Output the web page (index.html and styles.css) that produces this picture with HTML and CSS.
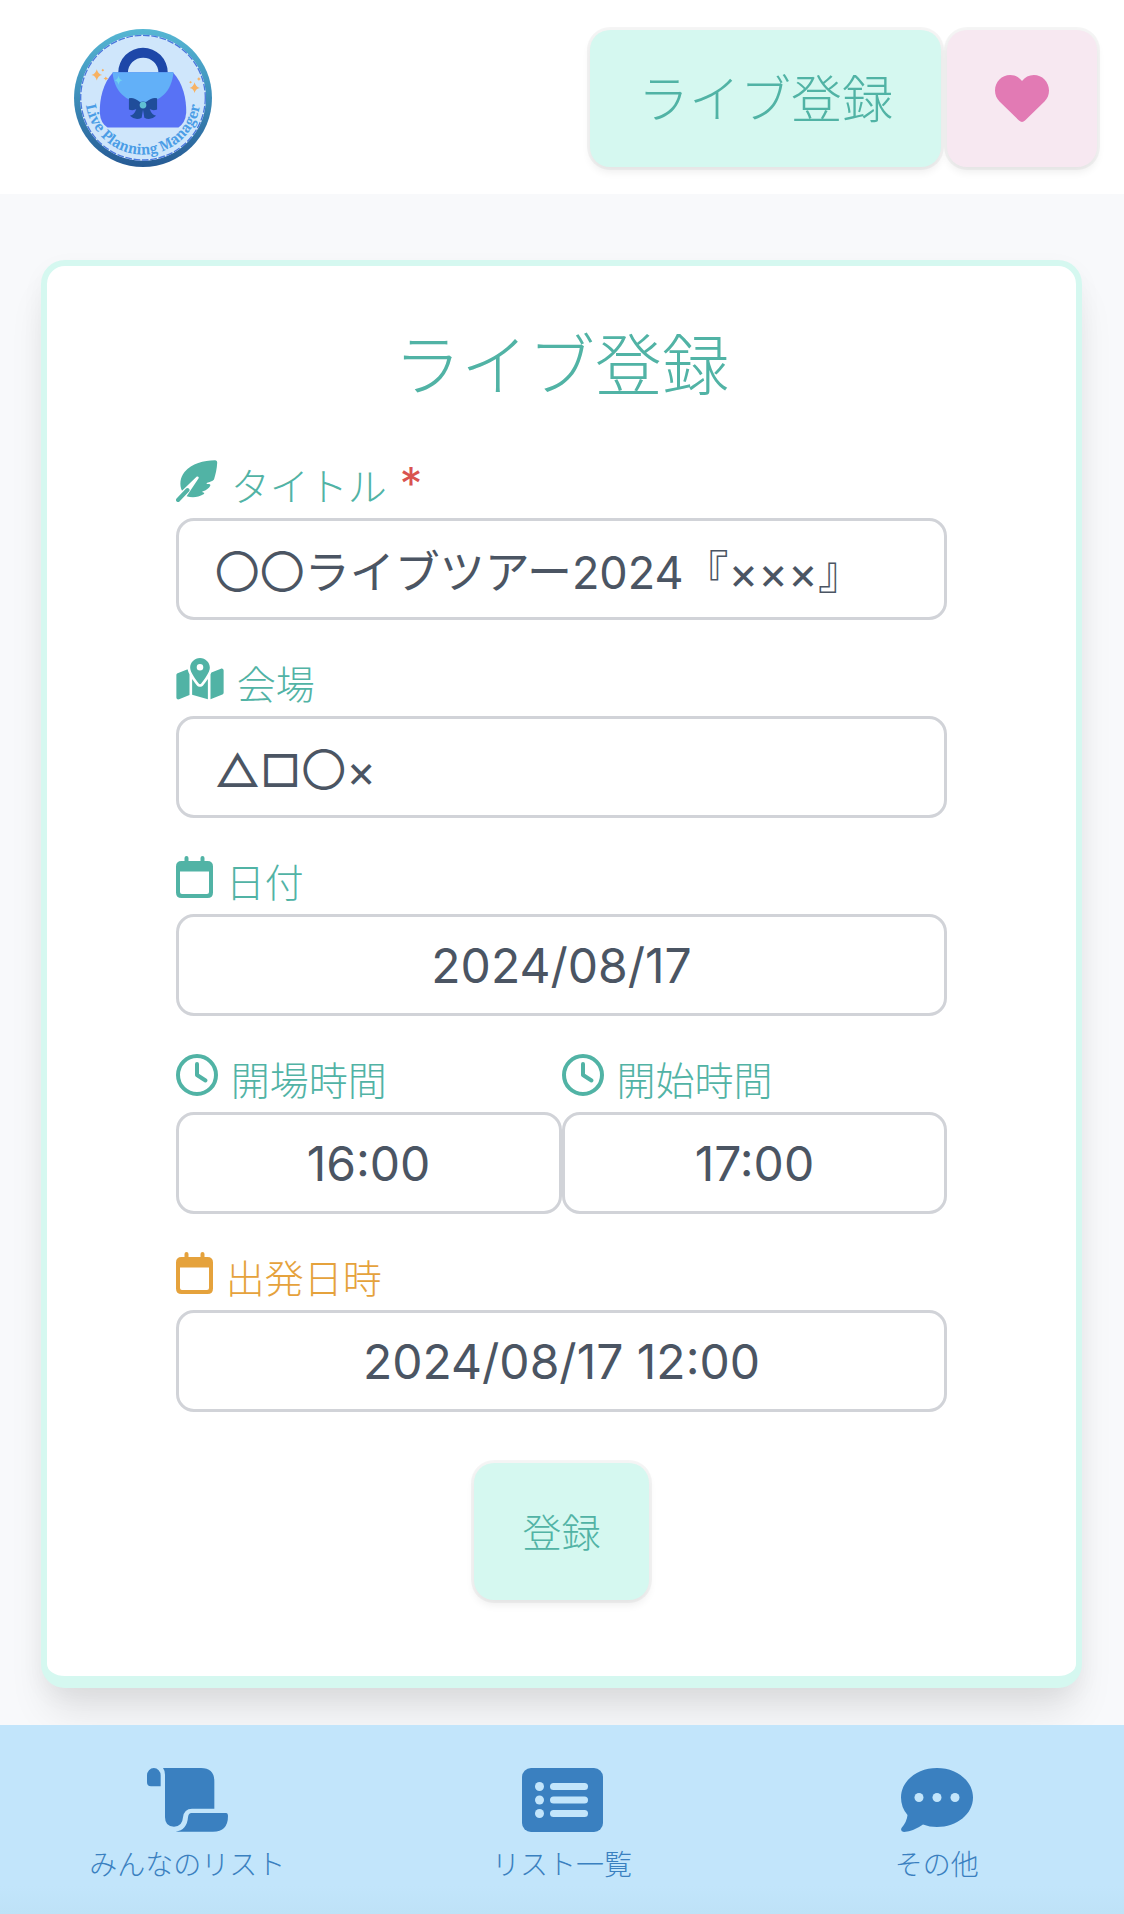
FILE: index.html
```html
<!DOCTYPE html>
<html lang="ja">
<head>
<meta charset="utf-8">
<meta name="viewport" content="width=device-width, initial-scale=1">
<title>ライブ登録</title>
<link rel="stylesheet" href="styles.css">
</head>
<body>
<svg class="sprite" aria-hidden="true">
  <symbol id="calendar" viewBox="0 0 37 42">
    <path fill-rule="evenodd" d="M8.500 5V2a2 2 0 0 1 4 0v3h12V2a2 2 0 0 1 4 0v3h3q5.500 0 5.500 5.500v26q0 5.500-5.500 5.500h-26Q0 42 0 36.500v-26Q0 5 5.500 5zM4 15.500v20.500q0 2 2 2h25q2 0 2-2V15.500z"/>
  </symbol>
  <symbol id="clock" viewBox="0 0 42 42">
    <circle cx="21" cy="21" r="19" fill="none" stroke="currentColor" stroke-width="4"/>
    <path d="M21 10v11l8.500 5.500" fill="none" stroke="currentColor" stroke-width="4" stroke-linecap="round" stroke-linejoin="round"/>
  </symbol>
</svg>

<header class="header">
  <a class="logo" href="#" aria-label="Live Planning Manager">
    <svg viewBox="43 29 412 412">
      <defs>
        <linearGradient id="rim" x1="0" y1="0" x2="0" y2="1"><stop offset="0" stop-color="#56b7d3"/><stop offset=".45" stop-color="#3f92bd"/><stop offset="1" stop-color="#265a94"/></linearGradient>
        <path id="arc" d="M77 232a172 172 0 0 0 344 0"/>
      </defs>
      <circle cx="249" cy="235" r="206" fill="url(#rim)"/>
      <circle cx="249" cy="234" r="186" fill="#cfe6fb" stroke="#dceefb" stroke-width="4"/>
      <circle cx="249" cy="234" r="186" fill="none" stroke="#4a78dc" stroke-width="4" stroke-dasharray="20 5"/>
      <path d="M175 160a74 75 0 0 1 148 0h-28a45 45 0 0 0-91 0z" fill="#1d47a8"/>
      <path d="M160 158h178c30 32 41 78 40 122q-3 30-23 43H143q-21-13-23-43c-1-44 10-90 40-122z" fill="#5872f5"/>
      <path d="M158 158h182c-5 57-40 90-91 90s-86-33-91-90z" fill="#62b0f8"/>
      <path d="M240 247q-20-16-33-11v33q12 5 22-1-6 18-19 20 17 16 35 6l4-24 4 24q18 10 35-6-13-2-19-20 10 6 22 1v-33q-13-5-33 11-9-3-18 0z" fill="#204d9a"/>
      <circle cx="249" cy="256" r="10" fill="#5fc0d4"/>
      <path d="M176 168q1 12 12 14-11 2-12 14-2-12-12-14 10-2 12-14z" fill="#71d3ef"/>
      <path d="M111 149q3 14 16 17-13 2-16 17-3-15-16-17 13-3 16-17zM403 188q3 14 16 17-13 2-16 15-3-13-15-15 12-3 15-17zM138 171q1 5 7 6-6 1-7 6-1-5-7-6 6-1 7-6zM416 172q1 5 6 6-5 1-6 6-1-5-6-6 5-1 6-6zM129 148l4 4-4 4-4-4zM391 184l4 4-4 4-4-4z" fill="#f7b263"/>
      <text class="logo-text"><textPath href="#arc" startOffset="50%">Live Planning Manager</textPath></text>
    </svg>
  </a>
  <nav class="header-actions">
    <a class="btn btn-mint btn-large" href="#">ライブ登録</a>
    <a class="btn btn-pink" href="#" aria-label="お気に入り">
      <svg class="heart" viewBox="0 0 54 47"><path d="M27 6C24 2 20 0 15.200 0 6.800 0 0 6.800 0 15.500c0 4 1.500 8 4.500 11L24 45.600q3 2.800 6 0l19.500-19.100c3-3 4.500-7 4.500-11C54 6.800 47.200 0 38.800 0 34 0 30 2 27 6z"/></svg>
    </a>
  </nav>
</header>

<main class="main">
  <section class="card">
    <h1 class="title">ライブ登録</h1>
    <form class="form">
      <div class="field">
        <label class="label" for="title">
          <svg class="icon icon-feather" viewBox="0 0 42 42"><path d="M39 .2q2.300 0 2.200 2.600c-.3 6-1.600 11.500-3.200 16.700-1.500 1.800-4.500 2.600-6.800 3.200-1 .4-.8 1.400.3 1.400 2 0 3.200.2 2.800 1.600-1 2.600-4.300 4.500-7.400 5.600-1 .4-.6 1.200.4 1.200 1.300 0 1.200 1 .2 1.700-5.300 3.300-11.500 3.700-16.900 2L22.300 18.800c1.400-1.600-.5-3.300-2-1.900L6 30.700C3.200 25 4 17.600 8.500 12 16 3 27.500.5 39 .2z"/><path d="M2 40L11.500 30" fill="none" stroke="currentColor" stroke-width="4" stroke-linecap="round"/></svg>
          <span>タイトル</span><span class="required">*</span>
        </label>
        <input class="input input-left" id="title" type="text" value="〇〇ライブツアー2024『×××』" required>
      </div>
      <div class="field">
        <label class="label" for="venue">
          <svg class="icon icon-map" viewBox="0 0 576 512"><path fill-rule="evenodd" d="M408 120c0 54.600-73.100 151.900-105.200 192c-7.700 9.600-22 9.600-29.600 0C241.100 271.900 168 174.600 168 120C168 53.700 221.700 0 288 0s120 53.700 120 120zm8 80.400c3.500-6.900 6.700-13.800 9.600-20.600c.5-1.200 1-2.500 1.500-3.700l116-46.400C558.900 123.400 576 135 576 152V422.800c0 9.800-6 18.600-15.100 22.300L416 503V200.400zM137.600 138.300c2.400 14.100 7.200 28.300 12.800 41.500c2.900 6.800 6.100 13.700 9.600 20.600V451.800L32.900 502.700C17.100 509 0 497.400 0 480.400V209.600c0-9.800 6-18.600 15.100-22.300l122.600-49zM327.800 332c13.900-17.400 35.700-45.700 56.200-77V504.300L192 449.400V255c20.500 31.300 42.300 59.600 56.200 77c20.500 25.600 59.100 25.600 79.600 0zM288 152a40 40 0 1 0 0-80 40 40 0 1 0 0 80z"/></svg>
          <span>会場</span>
        </label>
        <input class="input input-left" id="venue" type="text" value="△□〇×">
      </div>
      <div class="field">
        <label class="label" for="date"><svg class="icon icon-calendar"><use href="#calendar"/></svg><span>日付</span></label>
        <input class="input" id="date" type="text" value="2024/08/17">
      </div>
      <div class="field-row">
        <div class="field">
          <label class="label" for="open"><svg class="icon"><use href="#clock"/></svg><span>開場時間</span></label>
          <input class="input" id="open" type="text" value="16:00">
        </div>
        <div class="field">
          <label class="label" for="start"><svg class="icon"><use href="#clock"/></svg><span>開始時間</span></label>
          <input class="input" id="start" type="text" value="17:00">
        </div>
      </div>
      <div class="field">
        <label class="label label-orange" for="departure"><svg class="icon icon-calendar"><use href="#calendar"/></svg><span>出発日時</span></label>
        <input class="input" id="departure" type="text" value="2024/08/17 12:00">
      </div>
      <button class="btn btn-mint submit" type="submit">登録</button>
    </form>
  </section>
</main>

<nav class="tabs">
  <a class="tab" href="#">
    <svg class="tab-icon" viewBox="0 0 243 192"><path d="M0 22a20.500 22 0 0 1 41 0v33H12Q0 55 0 43zM48 0h114q40 0 40 40v82h-67q-24 0-27 26-2 28-27 28-27 0-27-28V20Q54 8 48 0zM123 148q1-13 11-13h104q5 0 5 8 0 48-45 48H86q34-4 37-43z"/></svg>
    <span>みんなのリスト</span>
  </a>
  <a class="tab" href="#">
    <svg class="tab-icon" viewBox="0 0 81 64"><rect width="81" height="64" rx="9"/><g fill="#c2e5fb"><circle cx="17.500" cy="18.500" r="4.500"/><circle cx="17.500" cy="32" r="4.500"/><circle cx="17.500" cy="45.500" r="4.500"/><rect x="28" y="15" width="38" height="7" rx="3.500"/><rect x="28" y="28.500" width="38" height="7" rx="3.500"/><rect x="28" y="42" width="38" height="7" rx="3.500"/></g></svg>
    <span>リスト一覧</span>
  </a>
  <a class="tab" href="#">
    <svg class="tab-icon" viewBox="0 0 72 64"><path d="M36 0c20 0 36 13 36 29.500S56 59 36 59q-7.500 0-14-2.500Q13 63 3 64q-4-.5-2.500-4Q6 53.500 6.500 47 0 39.500 0 29.500C0 13 16 0 36 0z"/><g fill="#c2e5fb"><circle cx="18" cy="29.500" r="4.500"/><circle cx="36" cy="29.500" r="4.500"/><circle cx="54" cy="29.500" r="4.500"/></g></svg>
    <span>その他</span>
  </a>
</nav>
</body>
</html>
```
FILE: styles.css
```css
*, *::before, *::after { box-sizing: border-box; }

body {
  margin: 0;
  min-height: 100vh;
  display: flex;
  flex-direction: column;
  background: #f8f9fb;
  color: #4b5563;
  font-family: "Noto Sans CJK JP", sans-serif;
  font-weight: 300;
}

a { color: inherit; text-decoration: none; }
svg { display: block; fill: currentColor; }
.sprite { width: 0; height: 0; position: absolute; }

.header {
  display: flex;
  justify-content: space-between;
  align-items: center;
  padding: 29px 27px 27px 74px;
  background: #fff;
}
.logo svg { width: 138px; height: 138px; }
.logo-text {
  fill: #4b9de6;
  font-family: "Noto Serif", "DejaVu Serif", serif;
  font-weight: 700;
  font-size: 42px;
  text-anchor: middle;
}
.header-actions { display: flex; gap: 6px; }

.btn {
  display: flex;
  align-items: center;
  justify-content: center;
  min-height: 137px;
  padding: 0 48px 4px;
  border: 0;
  border-radius: 20px;
  box-shadow: 0 0 0 3px rgba(0, 0, 0, .04), 0 5px 9px rgba(0, 0, 0, .07);
  font-family: inherit;
  font-weight: 300;
  font-size: 39px;
  line-height: 48px;
}
.btn-large { font-size: 51px; }
.btn-mint { background: #d5f8f0; color: #51b3a5; }
.btn-pink { padding-bottom: 0; background: #f7e8f1; color: #e27ab4; }
.heart { width: 54px; height: 47px; }

.main { flex: 1; padding: 66px 42px 37px 41px; }
.card {
  padding: 59px 0 76px;
  background: #fff;
  border: 6px solid #d5f8f0;
  border-bottom-width: 12px;
  border-radius: 24px;
  box-shadow: 0 30px 40px -8px rgba(0, 0, 0, .1), 0 8px 24px rgba(0, 0, 0, .04);
}
.title {
  margin: 0 0 64px;
  color: #51b3a5;
  font-size: 67px;
  font-weight: 300;
  line-height: 72px;
  text-align: center;
}

.form { width: 75%; margin: 0 auto; display: flex; flex-direction: column; gap: 39px; }
.field-row { display: flex; }
.field { flex: 1; min-width: 0; }
.label {
  display: flex;
  align-items: center;
  gap: 13px;
  height: 46px;
  margin-bottom: 11px;
  color: #51b3a5;
  font-size: 39px;
  line-height: 46px;
}
.label-orange { color: #e5a23c; }
.required { color: #d9534f; font-family: Inter, sans-serif; font-weight: 400; font-size: 45px; }
.icon { flex: none; width: 42px; height: 42px; margin-bottom: 6px; }
.icon-map { width: 48px; }
.icon-calendar { width: 37px; }

.input {
  display: block;
  width: 100%;
  height: 102px;
  padding: 0 36px;
  background: #fff;
  border: 3px solid #d1d3d8;
  border-radius: 18px;
  color: #4b5563;
  font-family: Inter, "Noto Sans CJK JP", sans-serif;
  font-size: 48px;
  font-weight: 400;
  text-align: center;
}
.input-left { font-size: 45px; text-align: left; }
.submit { align-self: center; margin-top: 12px; }

.tabs {
  position: relative;
  display: flex;
  padding: 43px 0 32px;
  background: linear-gradient(#c2e5fb 85%, #bee2f7);
  color: #3a80c0;
}
.tab {
  flex: 1;
  display: flex;
  flex-direction: column;
  align-items: center;
  gap: 12px;
  font-size: 28px;
  line-height: 38px;
}
.tab-icon { height: 64px; }
```
